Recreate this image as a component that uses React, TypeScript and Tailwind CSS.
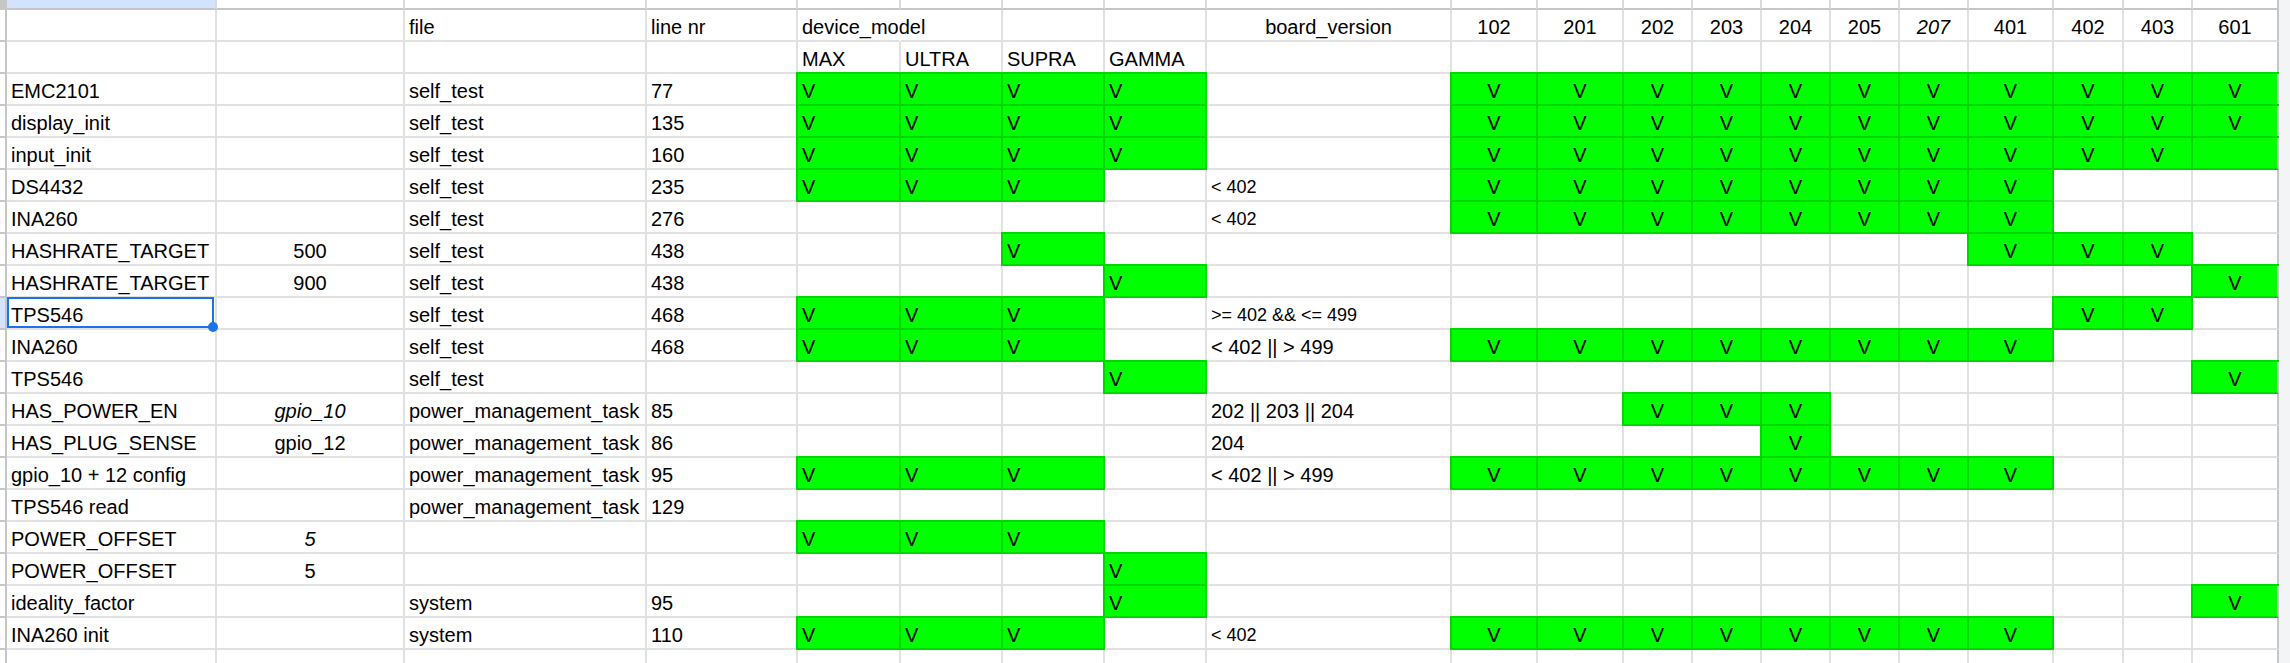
import React from "react";

type Cell = { t?: string; g?: boolean; it?: boolean; sm?: boolean; ctr?: boolean; noR?: boolean };

const W = [
  "w-[210px]",
  "w-[188px]",
  "w-[242px]",
  "w-[151px]",
  "w-[103px]",
  "w-[102px]",
  "w-[102px]",
  "w-[102px]",
  "w-[245px]",
  "w-[86px]",
  "w-[86px]",
  "w-[69px]",
  "w-[69px]",
  "w-[69px]",
  "w-[69px]",
  "w-[69px]",
  "w-[85px]",
  "w-[70px]",
  "w-[69px]",
  "w-[86px]",
];

function mk(
  a: string,
  b: string | Cell,
  c: string,
  d: string,
  models: string,
  cond: string | Cell,
  boards: string
): Cell[] {
  const row: Cell[] = [];
  row.push({ t: a });
  row.push(typeof b === "string" ? { t: b, ctr: true } : { ...b, ctr: true });
  row.push({ t: c });
  row.push({ t: d });
  for (const ch of models) {
    row.push(ch === "V" ? { t: "V", g: true } : ch === "g" ? { g: true } : {});
  }
  row.push(typeof cond === "string" ? { t: cond } : cond);
  for (const ch of boards) {
    row.push(ch === "V" ? { t: "V", g: true, ctr: true } : ch === "g" ? { g: true } : {});
  }
  return row;
}

const header1: Cell[] = [
  {},
  {},
  { t: "file" },
  { t: "line nr" },
  { t: "device_model", noR: true },
  {},
  {},
  {},
  { t: "board_version", ctr: true },
  { t: "102", ctr: true },
  { t: "201", ctr: true },
  { t: "202", ctr: true },
  { t: "203", ctr: true },
  { t: "204", ctr: true },
  { t: "205", ctr: true },
  { t: "207", ctr: true, it: true },
  { t: "401", ctr: true },
  { t: "402", ctr: true },
  { t: "403", ctr: true },
  { t: "601", ctr: true },
];

const header2: Cell[] = [
  {},
  {},
  {},
  {},
  { t: "MAX" },
  { t: "ULTRA" },
  { t: "SUPRA" },
  { t: "GAMMA" },
  {},
  {},
  {},
  {},
  {},
  {},
  {},
  {},
  {},
  {},
  {},
  {},
];

const SM = (t: string): Cell => ({ t, sm: true });

const rows: Cell[][] = [
  header1,
  header2,
  mk("EMC2101", "", "self_test", "77", "VVVV", "", "VVVVVVVVVVV"),
  mk("display_init", "", "self_test", "135", "VVVV", "", "VVVVVVVVVVV"),
  mk("input_init", "", "self_test", "160", "VVVV", "", "VVVVVVVVVVg"),
  mk("DS4432", "", "self_test", "235", "VVV-", SM("< 402"), "VVVVVVVV---"),
  mk("INA260", "", "self_test", "276", "----", SM("< 402"), "VVVVVVVV---"),
  mk("HASHRATE_TARGET", "500", "self_test", "438", "--V-", "", "-------VVV-"),
  mk("HASHRATE_TARGET", "900", "self_test", "438", "---V", "", "----------V"),
  mk("TPS546", "", "self_test", "468", "VVV-", SM(">= 402 && <= 499"), "--------VV-"),
  mk("INA260", "", "self_test", "468", "VVV-", "< 402 || > 499", "VVVVVVVV---"),
  mk("TPS546", "", "self_test", "", "---V", "", "----------V"),
  mk("HAS_POWER_EN", { t: "gpio_10", it: true }, "power_management_task", "85", "----", "202 || 203 || 204", "--VVV------"),
  mk("HAS_PLUG_SENSE", "gpio_12", "power_management_task", "86", "----", "204", "----V------"),
  mk("gpio_10 + 12 config", "", "power_management_task", "95", "VVV-", "< 402 || > 499", "VVVVVVVV---"),
  mk("TPS546 read", "", "power_management_task", "129", "----", "", "-----------"),
  mk("POWER_OFFSET", { t: "5", it: true }, "", "", "VVV-", "", "-----------"),
  mk("POWER_OFFSET", "5", "", "", "---V", "", "-----------"),
  mk("ideality_factor", "", "system", "95", "---V", "", "----------V"),
  mk("INA260 init", "", "system", "110", "VVV-", SM("< 402"), "VVVVVVVV---"),
];

const SEL_ROW = 9;

function CellView({ cell, i, selected }: { cell: Cell; i: number; selected: boolean }) {
  const last = i === 19;
  const right = last
    ? "border-r-[#c4c7c5]"
    : cell.noR
    ? "border-r-white"
    : cell.g
    ? "border-r-[#00d600]"
    : "border-r-[#e1e1e1]";
  const cls = [
    "relative shrink-0 h-full border-r-2 border-b-2 flex items-end pb-[1px] px-[4px] whitespace-nowrap leading-[23px]",
    W[i],
    right,
    cell.g
      ? "bg-[#00ff00] border-b-[#00d600] shadow-[0_-2px_0_0_#00d600,-2px_0_0_0_#00d600,-2px_-2px_0_0_#00d600]"
      : "border-b-[#e1e1e1]",
    cell.ctr ? "justify-center" : "",
    cell.sm ? "text-[18px]" : "text-[20px]",
    cell.it ? "italic" : "",
  ].join(" ");
  return (
    <div className={cls}>
      {cell.t ? <span>{cell.t}</span> : null}
      {selected ? (
        <div className="absolute -top-[1px] left-0 right-[1px] bottom-0 border-2 border-[#1a73e8] z-10 pointer-events-none">
          <div className="absolute -right-[6px] -bottom-[6px] w-[10px] h-[10px] rounded-full bg-[#1a73e8]" />
        </div>
      ) : null}
    </div>
  );
}

export default function App() {
  return (
    <div className="w-[2290px] h-[663px] overflow-hidden bg-white flex flex-col text-black font-['Liberation_Sans',Arial,sans-serif]">
      {/* column header band */}
      <div className="flex h-[10px] shrink-0">
        <div className="w-[7px] shrink-0 h-full bg-[#c4c7c5]" />
        {W.map((w, i) => (
          <div
            key={i}
            className={[
              "shrink-0 h-full border-b-2 border-b-[#c4c7c5] border-r-2",
              w,
              i === 19 ? "border-r-[#c4c7c5]" : "border-r-[#dadada]",
              i === 0 ? "bg-[#d3e3fd]" : "bg-white",
            ].join(" ")}
          />
        ))}
        <div className="flex-1 bg-[#f3f4f5]" />
      </div>
      {rows.map((row, r) => (
        <div key={r} className="flex h-[32px] shrink-0">
          <div
            className={[
              "w-[7px] shrink-0 h-full border-r-2 border-b-2 border-[#c4c7c5]",
              r === SEL_ROW ? "bg-[#d3e3fd]" : "bg-white",
            ].join(" ")}
          />
          {row.map((cell, i) => (
            <CellView key={i} cell={cell} i={i} selected={r === SEL_ROW && i === 0} />
          ))}
          <div className="flex-1 bg-[#f3f4f5]" />
        </div>
      ))}
      <div className="flex h-[13px] shrink-0">
        <div className="w-[7px] shrink-0 h-full border-r-2 border-[#c4c7c5] bg-white" />
        {W.map((w, i) => (
          <div
            key={i}
            className={[
              "shrink-0 h-full border-r-2",
              w,
              i === 19 ? "border-r-[#c4c7c5]" : "border-r-[#e1e1e1]",
            ].join(" ")}
          />
        ))}
        <div className="flex-1 bg-[#f3f4f5]" />
      </div>
    </div>
  );
}
